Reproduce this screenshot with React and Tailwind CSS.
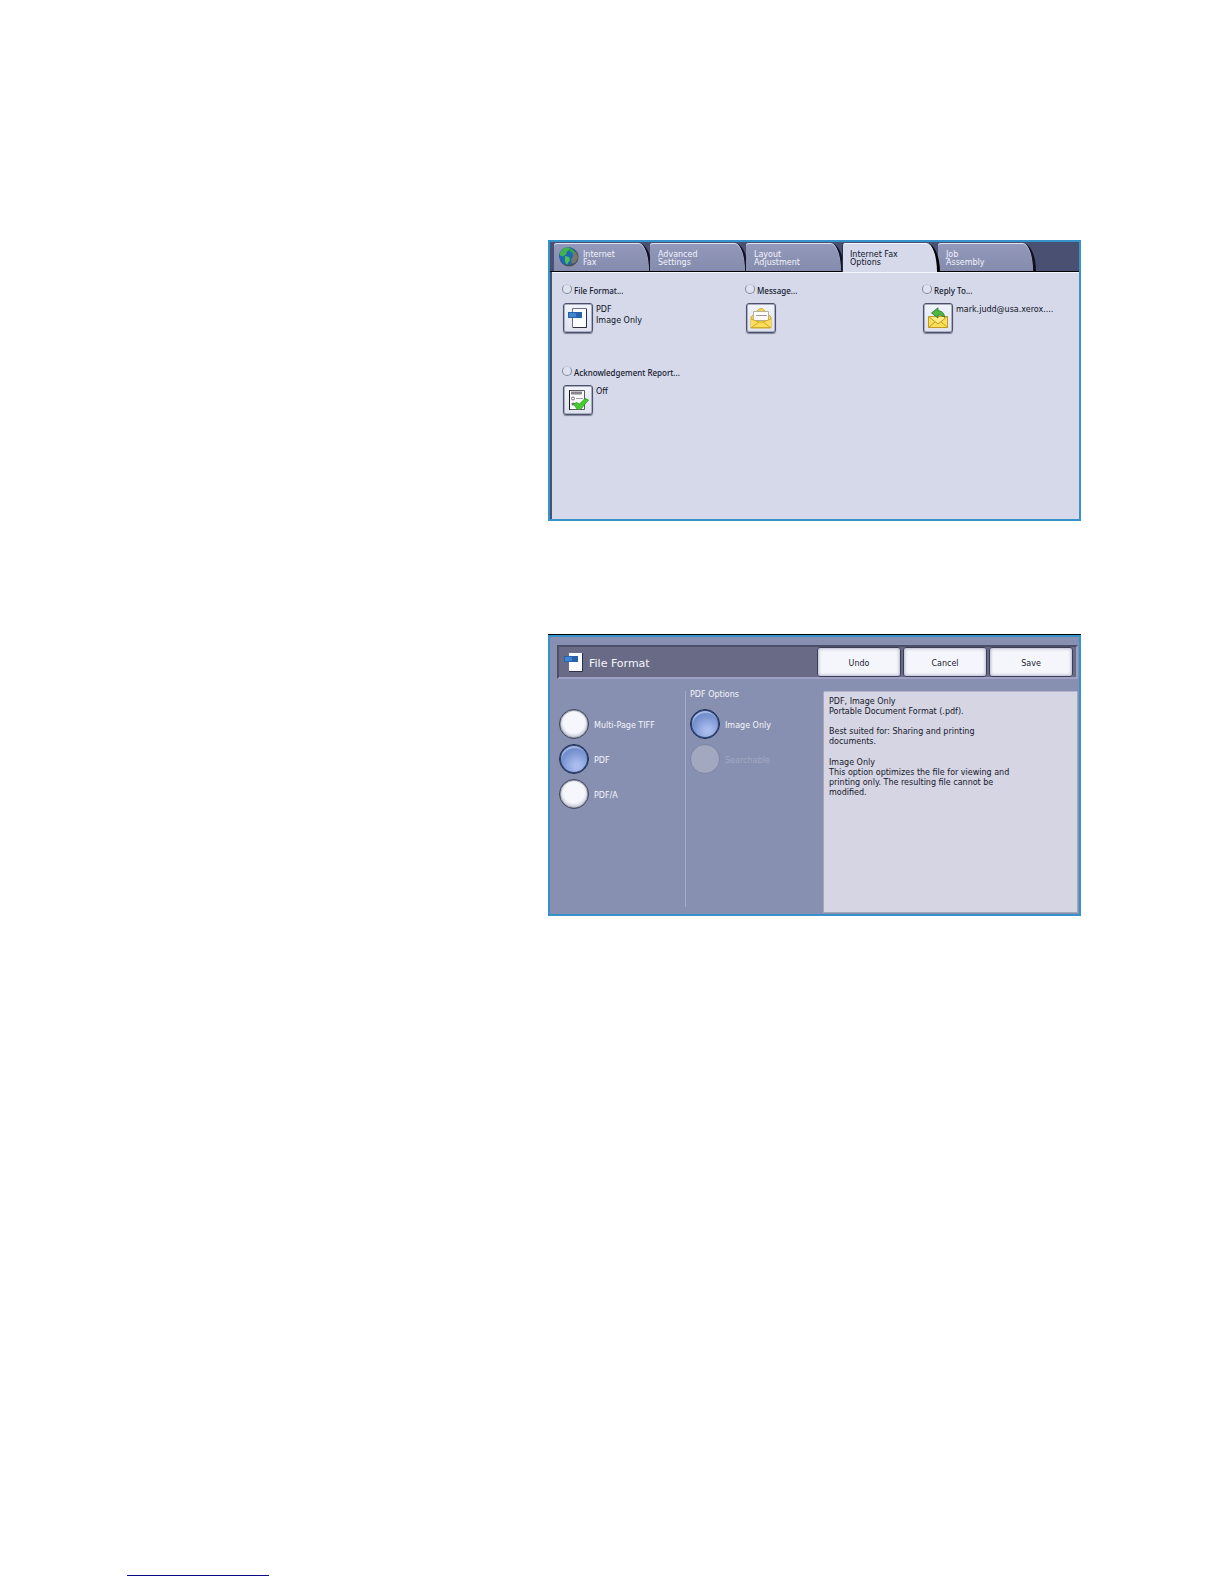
import { useState } from 'react';

const tabs = ['Internet\nFax', 'Advanced\nSettings', 'Layout\nAdjustment', 'Internet Fax\nOptions', 'Job\nAssembly'];

function GlobeIcon() {
  return (
    <svg width="21" height="21" viewBox="0 0 21 21" aria-hidden="true">
      <circle cx="11" cy="11" r="9.5" fill="#4b5058" />
      <circle cx="10" cy="10" r="9" fill="#1f66b4" />
      <path d="M4 4c2-2.500 5-3 7-2.500l1 2-3 2-1 3-3 2-3-1c-.4-2 .6-4.200 2-5.500z" fill="#3fb649" />
      <path d="M7 10l4 1 1 3-3 4.500c-2-.8-2.500-5.500-2-8.500z" fill="#4cc04f" />
      <path d="M14 5l4 1 2 5-2 5-4 2-1-4 2-4z" fill="#74786f" />
      <path d="M12 2c3 1.200 5 3.500 5.500 6l-3-1-3-2z" fill="#3aa04a" />
    </svg>
  );
}

function FormatIcon() {
  return (
    <svg width="20" height="22" viewBox="0 0 20 22" aria-hidden="true">
      <path d="M4.500 1.500h14v19h-14z" fill="#fbfcff" stroke="#6b7189" />
      <path d="M18.500 2v18.500H5" fill="none" stroke="#2b2f48" />
      <rect x="0" y="5" width="14" height="6" fill="#2a61ab" />
      <rect x="1" y="6" width="7" height="4" fill="#3f86d0" />
    </svg>
  );
}

function MessageIcon() {
  return (
    <svg width="22" height="22" viewBox="0 0 22 22" aria-hidden="true">
      <path d="M1 10L8 3c1.500-2 4.500-2 6 0l7 7v11H1z" fill="#f6d650" stroke="#d3ab35" />
      <path d="M3.500 4.500h15v9h-15z" fill="#fffefa" stroke="#b5b09a" />
      <path d="M6 8.500h11" stroke="#9a9aa4" />
      <path d="M1 12l7.500 3h5l7.500-3V21H1z" fill="#fbdf5b" />
      <path d="M1.500 20.500L9 15h4l7.500 5.500M1 12l8 3M21 12l-8 3M1 20.500h20" fill="none" stroke="#d3a92c" />
    </svg>
  );
}

function ReplyIcon() {
  return (
    <svg width="22" height="22" viewBox="0 0 22 22" aria-hidden="true">
      <path d="M1.500 9.500h19v11h-19z" fill="#fbe05a" stroke="#c59a22" />
      <path d="M1.500 20.500l7-6M20.500 20.500l-7-6" stroke="#c59a22" />
      <path d="M1.500 9.500L11 17l9.500-7.500z" fill="#fdeb86" stroke="#c59a22" />
      <path d="M4.500 6L11 .8v3c4 0 6.500 2.500 6.500 6.700-1.500-2-3.500-2.500-6.500-2.500v3z" fill="#4fb83f" stroke="#23762a" strokeWidth=".8" />
    </svg>
  );
}

function ReportIcon() {
  return (
    <svg width="22" height="22" viewBox="0 0 22 22" aria-hidden="true">
      <path d="M2.500 1.500h15v19h-15z" fill="#fdfdfd" stroke="#5a5a62" />
      <path d="M2.500 1v20" stroke="#18181c" />
      <path d="M4 4h11" stroke="#85858f" strokeWidth="3" />
      <circle cx="6" cy="9.500" r="1.500" fill="none" stroke="#6e6e78" />
      <circle cx="6" cy="15" r="1.500" fill="#6e6e78" />
      <path d="M9 9.500h7" stroke="#a2a2aa" />
      <path d="M6.500 15l3-1.500 3 1.500 5.500-5.500 3.500 1.500-8 9.500h-3z" fill="#44cc30" stroke="#2a9a22" strokeWidth=".8" />
    </svg>
  );
}

function OptionCell({ label, value, icon }) {
  return (
    <div className="h-[82px]">
      <div className="flex h-[12px] items-center gap-[2px]">
        <span className="size-[10px] rounded-full border border-[#858997] border-t-[#c4c8d8] bg-[#dde1f0]"></span>
        <span className="pt-[4px] font-['Noto_Sans',sans-serif] font-medium text-[#14182a]">{label}</span>
      </div>
      <div className="mt-[8px] flex gap-[3px] pl-px">
        <button aria-label={label} className="flex size-[30px] shrink-0 items-center justify-center rounded-[3px] border border-[#4b516b] bg-linear-to-b from-[#f2f4fb] to-[#dfe2ee] shadow-[inset_0_0_0_1px_#a9aec2,0_1px_1px_#7d829a]">
          {icon}
        </button>
        <span className="whitespace-pre pt-px leading-[11px] text-[#10131f]">{value}</span>
      </div>
    </div>
  );
}

function FaxOptions() {
  const [active, setActive] = useState(3);

  return (
    <section className="flex min-h-[281px] flex-col border-2 border-[#3592cb] bg-[#d5d9ea]">
      <div role="tablist" className="flex h-[30px] shrink-0 border-b border-black bg-[#4a5072] pl-[4px] pt-px">
        {tabs.map((tab, i) => (
          <button
            key={tab}
            role="tab"
            aria-selected={i === active}
            onClick={() => setActive(i)}
            className={
              i === active
                ? 'z-10 -mr-[2px] -mb-px flex w-[98px] shrink-0 items-start rounded-tl-[3px] rounded-tr-[14px_30px] border-r-[3px] border-l border-black border-l-[#2b2f48] bg-[#d5d9ea] pl-[7px] pt-[8px] text-left text-[#12162a] shadow-[inset_0_1px_0_#f6f8ff]'
                : 'relative -mr-[2px] flex w-[98px] shrink-0 items-start rounded-tl-[3px] rounded-tr-[14px_30px] border-r-[3px] border-[#10121f] bg-linear-to-b from-[#9499bb] to-[#858bad] pl-[8px] pt-[8px] text-left text-[#f1f3fc] shadow-[inset_0_1px_0_#dfe2f2]'
            }
          >
            {i === 0 && <span className="-ml-[4px] -mt-[5px] mr-[4px]"><GlobeIcon /></span>}
            <span className="whitespace-pre leading-[8px]">{tab}</span>
          </button>
        ))}
      </div>
      <div className="grid grow grid-cols-[183fr_177fr_157fr] content-start border-l-2 border-[#4a5072] pl-[10px] pt-[11px] shadow-[inset_0_1px_0_#f4f6ff]">
        <OptionCell label="File Format..." value={'PDF\nImage Only'} icon={<FormatIcon />} />
        <OptionCell label="Message..." icon={<MessageIcon />} />
        <OptionCell label="Reply To..." value="mark.judd@usa.xerox...." icon={<ReplyIcon />} />
        <OptionCell label="Acknowledgement Report..." value="Off" icon={<ReportIcon />} />
      </div>
    </section>
  );
}

function RadioRow({ name, label, checked, disabled, onChange }) {
  return (
    <label className="flex items-center gap-[5px] text-[#f4f5fc] has-disabled:text-[#a2a8c4]">
      <input
        type="radio"
        name={name}
        checked={checked}
        disabled={disabled}
        onChange={onChange}
        className="size-[30px] appearance-none rounded-full border border-[#3d4357] bg-[radial-gradient(circle_at_50%_45%,#f6f7fd_50%,#c0c4d3_72%)] shadow-[inset_0_0_0_1px_#9a9eae] checked:border-[#1c2c52] checked:bg-[radial-gradient(circle_at_60%_75%,#a9bcee_10%,#6482c4_75%)] checked:shadow-[inset_0_0_0_1px_#2f4474,inset_1px_3px_1px_#a9bbe6] disabled:border-[#7e85a2] disabled:bg-[#a3a8c1] disabled:bg-none disabled:shadow-none"
      />
      <span className="pt-[3px]">{label}</span>
    </label>
  );
}

function FileFormat() {
  const [format, setFormat] = useState('PDF');

  return (
    <section className="border-t border-black">
      <div className="flex min-h-[281px] flex-col border-2 border-[#3592cb] bg-[#8890b1] pl-[7px] pr-px pt-[8px]">
        <header className="flex h-[34px] shrink-0 items-center border-2 border-t-[#4c4d66] border-r-[#9c9dc1] border-b-[#a09fc6] border-l-[#4c4d66] bg-[#696b86] pl-[5px]">
          <FormatIcon />
          <h2 className="ml-[5px] grow pt-[3px] text-[11px] text-[#f4f5fb]">File Format</h2>
          <div className="flex gap-[2px] pr-[3px]">
            {['Undo', 'Cancel', 'Save'].map((action) => (
              <button key={action} className="h-[30px] w-[84px] rounded-[3px] border border-[#3c3e56] bg-[#f5f6fc] pt-[3px] text-[#20222e] shadow-[inset_0_0_3px_1px_#b5b8cc]">{action}</button>
            ))}
          </div>
        </header>
        <div className="grid grow grid-cols-[128fr_138fr_255fr] pt-[12px]">
          <div className="flex flex-col gap-[5px] pl-[2px] pt-[18px]">
            {['Multi-Page TIFF', 'PDF', 'PDF/A'].map((item) => (
              <RadioRow key={item} name="format" label={item} checked={format === item} onChange={() => setFormat(item)} />
            ))}
          </div>
          <fieldset className="mb-[7px] border-l border-[#a5abc8] pl-[4px]">
            <legend className="float-left w-full leading-[8px] text-[#f4f5fc]">PDF Options</legend>
            <div className="flex flex-col gap-[5px] pt-[10px] clear-left">
              <RadioRow name="option" label="Image Only" checked onChange={() => {}} />
              <RadioRow name="option" label="Searchable" disabled />
            </div>
          </fieldset>
          <div className="mb-px rounded-tl-[2px] border border-[#a6a8b8] border-t-[#b4b6cc] bg-[#d5d5e3] pl-[5px] pt-[5px] leading-[10px] text-[#16182a]">
            <p>PDF, Image Only</p>
            <p>Portable Document Format (.pdf).</p>
            <p className="mt-[10px]">Best suited for: Sharing and printing<br />documents.</p>
            <p className="mt-[11px]">Image Only</p>
            <p>This option optimizes the file for viewing and<br />printing only. The resulting file cannot be<br />modified.</p>
          </div>
        </div>
      </div>
    </section>
  );
}

export default function App() {
  return (
    <main className="flex min-h-screen flex-col bg-white pt-[240px] pb-[8px] font-['DejaVu_Sans',sans-serif] text-[8px] leading-[10px]">
      <div className="ml-[548px] mr-[143px] flex flex-col gap-[113px]">
        <FaxOptions />
        <FileFormat />
      </div>
      <hr className="ml-[127px] mt-auto h-px w-[142px] border-0 bg-[#0c0c8c]" />
    </main>
  );
}
